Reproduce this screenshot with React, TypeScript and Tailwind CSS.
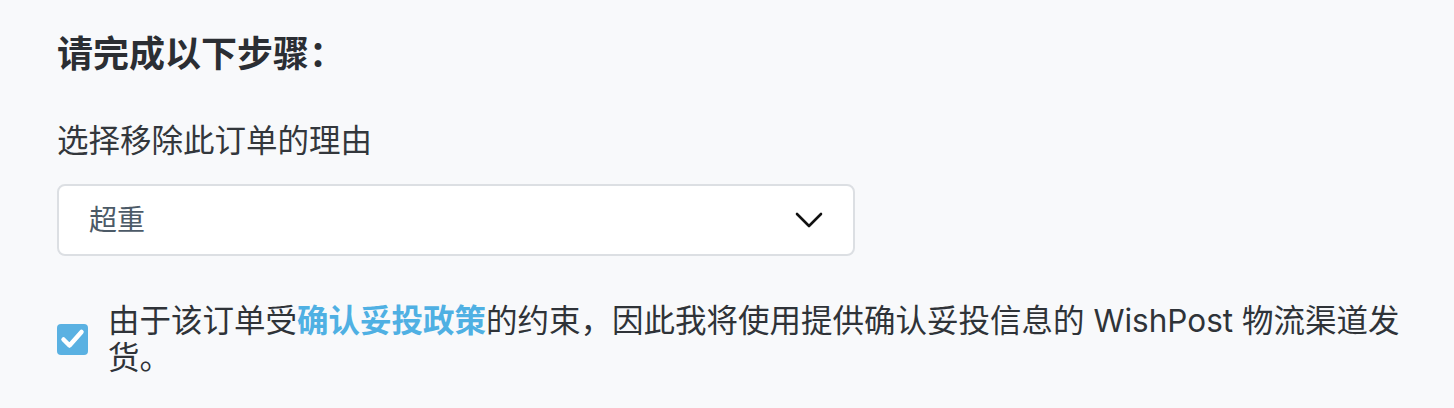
import React, { useState } from "react";

const ChevronDown = () => (
  <svg width="28" height="18" viewBox="0 0 28 18" fill="none">
    <path
      d="M2 3l12 12L26 3"
      stroke="#111"
      strokeWidth="2.6"
      strokeLinecap="round"
      strokeLinejoin="round"
    />
  </svg>
);

const App = () => {
  const [checked, setChecked] = useState(true);
  const font = {
    fontFamily:
      'Inter, "Noto Sans CJK SC", "Noto Sans", sans-serif',
  };

  return (
    <div
      className="w-[1454px] h-[408px] bg-[#f8f9fb] pl-[57px] pr-[20px] pt-[33px] text-[#2f3338]"
      style={font}
    >
      <h2 className="text-[36px] leading-[42px] font-bold text-[#2b2e33]">
        请完成以下步骤：
      </h2>
      <p className="mt-[46px] text-[31.5px] leading-[40px] text-[#33373c]">
        选择移除此订单的理由
      </p>
      <button className="mt-[23px] w-[798px] h-[72px] flex items-center justify-between rounded-[8px] border-2 border-[#dcdfe3] bg-white pl-[30px] pr-[30px]">
        <span className="text-[28px] text-[#4c5a67]">超重</span>
        <ChevronDown />
      </button>
      <label className="mt-[46px] flex items-center gap-[20px] cursor-pointer">
        <span
          onClick={() => setChecked(!checked)}
          className="shrink-0 w-[31px] h-[31px] rounded-[4px] bg-[#5ab1e2] flex items-center justify-center"
        >
          {checked && (
            <svg width="25" height="22" viewBox="0 0 25 22" fill="none">
              <path
                d="M3.5 11.5l6 6L21.5 4"
                stroke="white"
                strokeWidth="4.5"
                strokeLinecap="round"
                strokeLinejoin="round"
              />
            </svg>
          )}
        </span>
        <span className="text-[31.5px] leading-[37px] text-[#2f3338]">
          由于该订单受
          <a href="#" className="font-bold text-[#4fb0e3]">
            确认妥投政策
          </a>
          的约束，因此我将使用提供确认妥投信息的 WishPost 物流渠道发货。
        </span>
      </label>
    </div>
  );
};

export default App;
